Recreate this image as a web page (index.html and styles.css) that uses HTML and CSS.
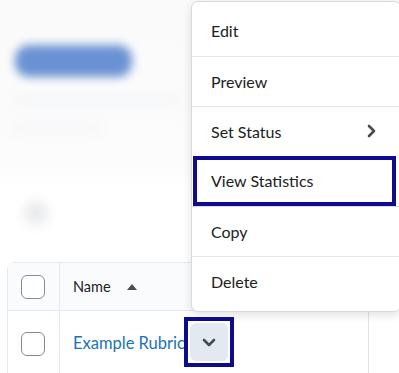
FILE: index.html
```html
<!DOCTYPE html>
<html lang="en">

<head>
    <meta charset="UTF-8">
    <title>Rubrics</title>
    <link rel="stylesheet" href="styles.css">
</head>

<body>
    <!-- Cabecera difuminada -->
    <div class="page-head">
        <div class="blur-title"></div>
        <div class="blur-line"></div>
        <div class="blur-line short"></div>
        <div class="blur-dot"></div>
    </div>

    <div class="rubric-table">
        <div class="row head">
            <div class="cell check"><span class="checkbox"></span></div>
            <div class="cell name">
                Name
                <svg class="sort" width="10" height="6" viewBox="0 0 10 6"><path d="M0 6 L5 0 L10 6 Z" fill="#494c4e"/></svg>
            </div>
        </div>
        <div class="row">
            <div class="cell check"><span class="checkbox"></span></div>
            <div class="cell name">
                <a href="#" class="link">Example Rubric</a>
                <span class="focus-ring">
                    <button class="more">
                        <svg width="14" height="9" viewBox="0 0 14 9"><path d="M2 2 L7 7 L12 2" fill="none" stroke="#494c4e" stroke-width="2.6" stroke-linecap="round" stroke-linejoin="round"/></svg>
                    </button>
                </span>
            </div>
        </div>
    </div>

    <!-- Menú contextual -->
    <div class="menu">
        <div class="item">Edit</div>
        <div class="item">Preview</div>
        <div class="item">Set Status
            <svg width="9" height="14" viewBox="0 0 9 14"><path d="M2 2 L7 7 L2 12" fill="none" stroke="#494c4e" stroke-width="2.6" stroke-linecap="round" stroke-linejoin="round"/></svg>
        </div>
        <div class="item focused">View Statistics</div>
        <div class="item">Copy</div>
        <div class="item">Delete</div>
    </div>
</body>

</html>
```

FILE: styles.css
```css
body {
    margin: 0;
    font-family: 'Lato', sans-serif;
    background: #fff;
    color: #202122;
    width: 399px;
    height: 373px;
    overflow: hidden;
    position: relative;
}

/* Cabecera */
.page-head {
    height: 262px;
    padding-top: 20px;
    box-sizing: border-box;
    background: linear-gradient(#fafafb, #fcfcfd 160px, #fff 190px);
}

.blur-title {
    margin: 25px 0 0 15px;
    width: 117px;
    height: 32px;
    border-radius: 14px;
    background: #6a92d3;
    filter: blur(5px);
}

.blur-line {
    margin: 18px 0 0 12px;
    width: 170px;
    height: 10px;
    background: #f5f6f7;
    filter: blur(6px);
}

.blur-line.short {
    width: 90px;
    margin-top: 18px;
}

.blur-dot {
    margin: 68px 0 0 24px;
    width: 24px;
    height: 24px;
    border-radius: 50%;
    background: #e9eaec;
    filter: blur(6px);
}

/* Tabla */
.rubric-table {
    margin-left: 7px;
    width: 362px;
    border-top: 1px solid #e3e9f1;
    border-left: 1px solid #e3e9f1;
    border-right: 1px solid #dfe3e8;
    border-top-left-radius: 8px;
    box-sizing: border-box;
}

.row {
    display: flex;
    height: 62px;
}

.row.head {
    height: 47px;
    background: #f9fbfc;
    border-bottom: 1px solid #e3e9f1;
}

.cell {
    display: flex;
    align-items: center;
}

.cell.check {
    width: 52px;
    justify-content: center;
    border-right: 1px solid #e3e9f1;
    box-sizing: border-box;
    padding-right: 1px;
}

.row:not(.head) .cell.check {
    align-items: flex-start;
    padding-top: 21px;
}

.checkbox {
    width: 22px;
    height: 22px;
    border: 1px solid #868c93;
    border-radius: 6px;
    background: #fff;
}

.cell.name {
    padding-left: 13px;
    font-size: 15px;
    color: #494c4e;
}

.row.head .cell.name {
    font-size: 14.5px;
    color: #202122;
}

.sort {
    margin-left: 16px;
}

.row:not(.head) .cell.name {
    align-items: flex-start;
    padding-top: 6px;
}

.link {
    color: #1a73b6;
    text-decoration: none;
    font-size: 16.5px;
    margin-top: 16px;
    white-space: nowrap;
}

.focus-ring {
    display: flex;
    margin-left: -1px;
    padding: 2px;
    border: 4px solid #0e0b8e;
    background: #fff;
}

.more {
    width: 38px;
    height: 38px;
    border: none;
    border-radius: 6px;
    background: #e3e9f1;
    display: flex;
    align-items: center;
    justify-content: center;
    padding: 0;
}

/* Menú */
.menu {
    position: absolute;
    left: 191px;
    top: 1px;
    width: 210px;
    padding: 4px 0 5px;
    background: #fff;
    border: 1px solid #d6dbe2;
    border-radius: 7px;
    box-shadow: 0 3px 10px rgba(0, 0, 0, 0.12);
    box-sizing: border-box;
}

.item {
    height: 50px;
    display: flex;
    align-items: center;
    justify-content: space-between;
    padding: 0 24px 1px 19px;
    font-size: 16px;
    border-top: 1px solid #e3e9f1;
    box-sizing: border-box;
}

.item:first-child {
    border-top: none;
}

.item.focused {
    margin: 0 4px 0 1px;
    padding-left: 14px;
    border: 4px solid #0e0b8e;
}

.item.focused + .item {
    border-top-color: #d6dbe2;
}
```
